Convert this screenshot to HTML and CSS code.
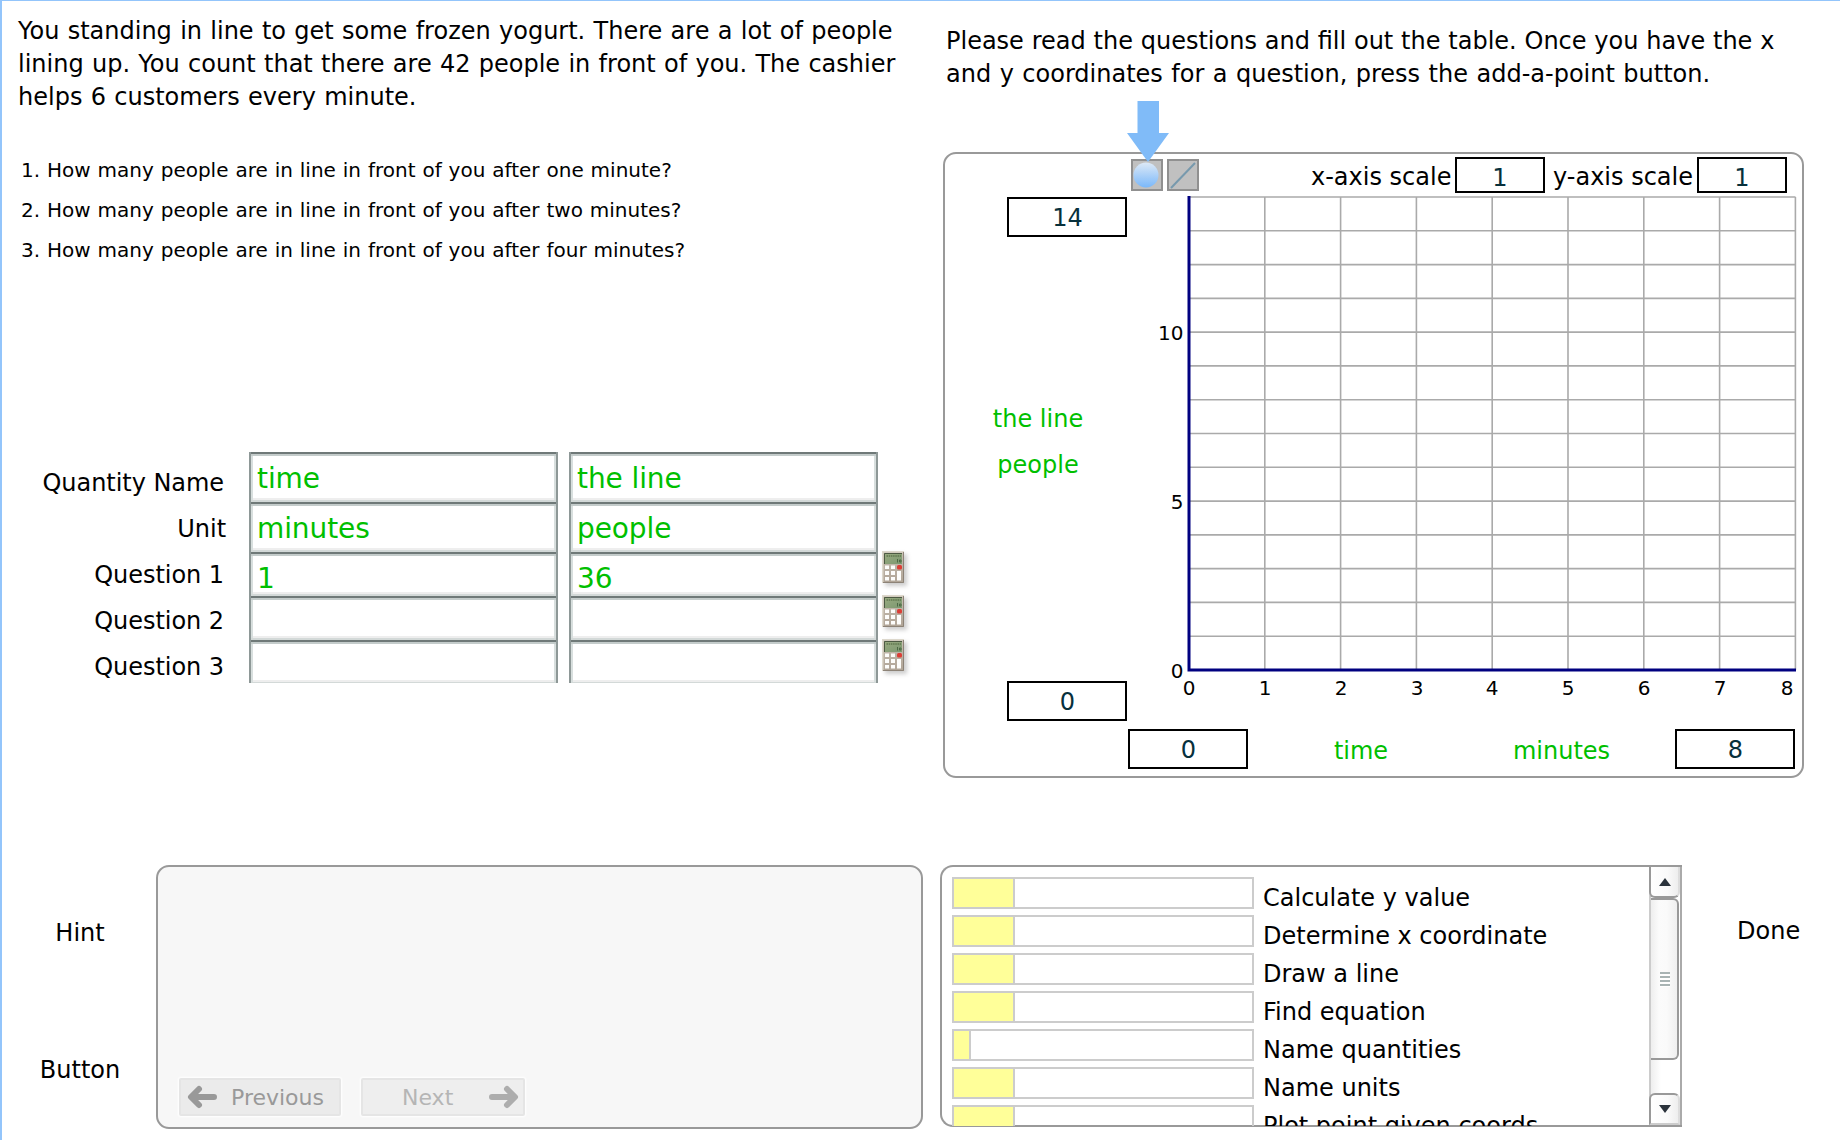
FILE: index.html
```html
<!DOCTYPE html>
<html lang="en">
<head>
<meta charset="utf-8">
<title>Frozen Yogurt Line</title>
<link rel="stylesheet" href="styles.css">
</head>
<body>
<svg class="defs" width="0" height="0" aria-hidden="true">
  <defs>
    <linearGradient id="lcd" x1="0" y1="0" x2="1" y2="1"><stop offset="0" stop-color="#9aab80"/><stop offset="1" stop-color="#7c9871"/></linearGradient>
    <linearGradient id="ball" x1="0" y1="0" x2="0" y2="1"><stop offset="0" stop-color="#dde9f6"/><stop offset="1" stop-color="#7ab8fa"/></linearGradient>
    <linearGradient id="case" x1="0" y1="0" x2="0" y2="1"><stop offset="0" stop-color="#c9c1b4"/><stop offset="1" stop-color="#b0a496"/></linearGradient>
    <symbol id="calc" viewBox="0 0 22 32">
      <rect width="22" height="32" fill="url(#case)"/>
      <path d="M0 32V0H22" fill="none" stroke="#ddd8cc" stroke-width="3"/>
      <path d="M21.500 1V31.500H1" fill="none" stroke="#8d8377"/>
      <rect x="2" y="2" width="18" height="11" fill="url(#lcd)"/>
      <path d="M2.500 13V2.500H20" fill="none" stroke="#4d5a43"/>
      <path d="M4.500 5H19" stroke="#60774f" stroke-width="1.500" stroke-dasharray="1.500 .7"/>
      <path d="M15.500 8v3.500M17.500 9h1.500v2h-1.500z" fill="none" stroke="#4c6844"/>
      <path d="M3 14.500h4v3.500h-4zM9 14.500h4v3.500h-4zM3 20h4v4h-4zM9 20h4v4h-4zM3 26h4v3.500h-4zM9 26h4v3.500h-4zM15 20h4v9.500h-4z" fill="#fdfdfb"/>
      <rect x="15" y="14" width="5" height="4.500" rx="1.500" fill="#dc3e36"/>
    </symbol>
  </defs>
</svg>
<div class="tutor">
  <section class="problem">
    <p class="story">You standing in line to get some frozen yogurt. There are a lot of people<br>lining up. You count that there are 42 people in front of you. The cashier<br>helps 6 customers every minute.</p>
    <div class="questions">
      <p>1. How many people are in line in front of you after one minute?</p>
      <p>2. How many people are in line in front of you after two minutes?</p>
      <p>3. How many people are in line in front of you after four minutes?</p>
    </div>
    <div class="worksheet">
      <div class="labels">
        <div>Quantity Name</div><div class="unit">Unit</div><div>Question 1</div><div>Question 2</div><div>Question 3</div>
      </div>
      <div class="column">
        <div class="cell tall">time</div><div class="cell tall">minutes</div><div class="cell">1</div><div class="cell"></div><div class="cell"></div>
      </div>
      <div class="column">
        <div class="cell tall">the line</div><div class="cell tall">people</div><div class="cell">36</div><div class="cell"></div><div class="cell"></div>
      </div>
      <div class="calculators">
        <svg><use href="#calc"/></svg><svg><use href="#calc"/></svg><svg><use href="#calc"/></svg>
      </div>
    </div>
  </section>

  <section class="grapher">
    <p class="instructions">Please read the questions and fill out the table. Once you have the x<br><span class="loose">and y coordinates for a question, press the add-a-point button.</span></p>
    <div class="graph">
      <svg class="pointer" viewBox="0 0 42 61"><path d="M10.500 0h21.500v32H42L21 61 0 32H10.500z" fill="#80bbf8"/></svg>
      <div class="toolbar">
        <svg class="tool" viewBox="0 0 32 32"><rect x="1" y="1" width="30" height="30" fill="#c0c0c0" stroke="#909090" stroke-width="2"/><circle cx="15" cy="16" r="12.500" fill="url(#ball)"/></svg>
        <svg class="tool" viewBox="0 0 32 32"><rect x="1" y="1" width="30" height="30" fill="#c0c0c0" stroke="#909090" stroke-width="2"/><path d="M4 29L28 4" stroke="#7799ad" stroke-width="2"/></svg>
        <span class="scale-label x-label">x-axis scale</span><div class="field scale">1</div>
        <span class="scale-label y-label">y-axis scale</span><div class="field scale">1</div>
      </div>
      <div class="plot-area">
        <div class="y-side">
          <div class="field">14</div>
          <div class="axis-name"><span>the line</span><span>people</span></div>
          <div class="field">0</div>
        </div>
        <svg class="plot" viewBox="1127 197 674 531">
          <g stroke="#aaa" stroke-width="1.600" fill="none">
            <path d="M1189 197H1795.500M1189 230.800H1795.500M1189 264.600H1795.500M1189 298.400H1795.500M1189 332.100H1795.500M1189 365.900H1795.500M1189 399.700H1795.500M1189 433.500H1795.500M1189 467.300H1795.500M1189 501.100H1795.500M1189 534.900H1795.500M1189 568.600H1795.500M1189 602.400H1795.500M1189 636.200H1795.500"/>
            <path d="M1264.800 197V670M1340.600 197V670M1416.400 197V670M1492.200 197V670M1568 197V670M1643.800 197V670M1719.600 197V670M1795.400 197V670"/>
          </g>
          <path d="M1189 196V670H1796" fill="none" stroke="#000080" stroke-width="3"/>
          <g class="ticks" text-anchor="middle">
            <text x="1189" y="695">0</text><text x="1265" y="695">1</text><text x="1341" y="695">2</text><text x="1417" y="695">3</text><text x="1492" y="695">4</text><text x="1568" y="695">5</text><text x="1644" y="695">6</text><text x="1720" y="695">7</text><text x="1787" y="695">8</text>
          </g>
          <g class="ticks" text-anchor="end">
            <text x="1183.500" y="340">10</text><text x="1183.500" y="509">5</text><text x="1183.500" y="678">0</text>
          </g>
        </svg>
      </div>
      <div class="x-side">
        <div class="field">0</div><span class="x-name">time</span><span class="x-unit">minutes</span><div class="field">8</div>
      </div>
    </div>
  </section>

  <section class="hints">
    <div class="hint-labels"><span>Hint</span><span>Button</span></div>
    <div class="hint-box">
      <div class="nav previous">
        <svg viewBox="0 0 30 24"><path d="M27 12H5M12 4L4 12L12 20" fill="none" stroke="#999" stroke-width="6" stroke-linecap="round" stroke-linejoin="round"/></svg><span>Previous</span>
      </div>
      <div class="nav next">
        <span>Next</span><svg viewBox="0 0 30 24"><path d="M3 12H25M18 4L26 12L18 20" fill="none" stroke="#adadad" stroke-width="6" stroke-linecap="round" stroke-linejoin="round"/></svg>
      </div>
    </div>
  </section>

  <section class="progress">
    <div class="skills">
      <div class="skill-list">
        <div class="skill"><div class="bar"><i></i></div>Calculate y value</div>
        <div class="skill"><div class="bar"><i></i></div>Determine x coordinate</div>
        <div class="skill"><div class="bar"><i></i></div>Draw a line</div>
        <div class="skill"><div class="bar"><i></i></div>Find equation</div>
        <div class="skill"><div class="bar"><i class="low"></i></div>Name quantities</div>
        <div class="skill"><div class="bar"><i></i></div>Name units</div>
        <div class="skill"><div class="bar"><i></i></div>Plot point given coords</div>
      </div>
      <div class="scrollbar">
        <div class="step up"><svg viewBox="0 0 12 8"><path d="M6 0L12 8H0z"/></svg></div>
        <div class="thumb"><b></b></div>
        <div class="step down"><svg viewBox="0 0 12 8"><path d="M0 0H12L6 8z"/></svg></div>
      </div>
    </div>
    <span class="done">Done</span>
  </section>
</div>
</body>
</html>
```
FILE: styles.css
```css
* { box-sizing: border-box; }
body { margin: 0; background: #fff; color: #000; font: 24px/33px Verdana, "DejaVu Sans", sans-serif; white-space: nowrap; }
p { margin: 0; }
.defs { position: absolute; }
.tutor {
  width: 1840px; height: 1140px; overflow: hidden;
  border: solid #93c5fb; border-width: 1px 0 0 2px;
  display: grid; grid-template-columns: 938px 1fr; grid-template-rows: 864px 1fr;
}

/* Word problem and worksheet */
.story { margin: 14px 0 0 16px; word-spacing: .67px; }
.questions { margin: 36px 0 0 19px; height: 302px; font-size: 20px; line-height: 40px; word-spacing: .55px; }
.worksheet { display: flex; height: 231px; overflow: hidden; }
.labels { width: 222px; padding-top: 8px; text-align: right; line-height: 46px; }
.labels div { letter-spacing: -.05px; }
.labels .unit { margin-right: -2px; }
.column { width: 309px; margin-left: 25px; border: solid #8e9897; border-width: 0 2px; }
.column + .column { margin-left: 11px; }
.cell {
  height: 44px; padding-left: 6px; line-height: 50px;
  border-top: 2px solid #6f7978;
  box-shadow: inset 0 2px #c4cccb, inset 0 -2px #d3d9d8, inset 2px 0 #d8dfde, inset -2px 0 #d8dfde, inset 0 -4px #eee;
  color: #00bf00; font-size: 28px; letter-spacing: -.1px;
}
.cell.tall { height: 50px; }
.calculators { display: flex; flex-direction: column; gap: 12px; margin: 99px 0 0 4px; width: 40px; }
.calculators svg { width: 22px; height: 32px; flex: none; overflow: visible; filter: drop-shadow(3px 3px 2px #0003); }

/* Graph */
.instructions { margin: 24px 0 0 6px; word-spacing: .18px; }
.loose { word-spacing: .85px; }
.graph { position: relative; width: 861px; height: 626px; margin: 61px 0 0 3px; border: 2px solid #999; border-radius: 13px; }
.pointer { position: absolute; left: 182px; top: -53px; width: 42px; height: 61px; }
.toolbar { display: flex; align-items: flex-start; height: 43px; padding: 3px 0 0 186px; }
.tool { width: 32px; height: 32px; margin: 2px 4px 0 0; }
.scale-label { line-height: 40px; }
.x-label { width: 144px; margin-left: 108px; }
.x-label + .field { margin-right: 8px; }
.y-label { width: 144px; }
.field { width: 120px; height: 40px; border: 2px solid #000; line-height: 39px; padding-left: 1px; text-align: center; color: #07303c; }
.field.scale { width: 90px; height: 36px; line-height: 39px; padding: 0; }
.plot-area { display: flex; height: 531px; }
.y-side { width: 182px; padding-left: 62px; display: flex; flex-direction: column; height: 524px; justify-content: space-between; }
.axis-name { display: flex; flex-direction: column; align-items: center; line-height: 46px; color: #00bf00; margin: 0 0 34px -58px; }
.plot { width: 674px; height: 531px; overflow: visible; }
.ticks { font-size: 20px; }
.x-side { display: flex; padding: 1px 0 0 183px; line-height: 45px; color: #00bf00; }
.x-name { width: 226px; text-align: center; }
.x-unit { width: 201px; padding-right: 26px; text-align: center; }

/* Hint window */
.hints { display: flex; }
.hint-labels { width: 154px; padding: 52px 0 0 2px; display: flex; flex-direction: column; gap: 104px; text-align: center; }
.hint-box { width: 767px; height: 264px; background: #f7f7f7; border: 2px solid #999; border-radius: 13px; display: flex; align-items: flex-end; gap: 20px; padding: 0 0 11px 21px; }
.nav { height: 38px; display: flex; align-items: center; border: 2px solid #e5e5e5; background: #ebebeb; color: #999; font-size: 22px; box-shadow: 0 0 2px 1px #fff; border-radius: 2px; }
.nav svg { width: 30px; height: 24px; }
.previous { width: 162px; padding-left: 6px; gap: 14px; }
.next { width: 164px; padding-left: 39px; gap: 36px; background: #eee; color: #b5b5b5; }

/* Skills */
.progress { display: flex; }
.skills { width: 742px; height: 262px; border: 2px solid #999; border-radius: 13px 0 0 13px; border-right-width: 0; display: flex; }
.skill-list { width: 707px; height: 259px; overflow: hidden; padding: 10px 0 0 10px; display: flex; flex-direction: column; gap: 6px; }
.skill { display: flex; flex: none; height: 32px; line-height: 42px; }
.bar { width: 302px; border: 2px solid #ccc; margin-right: 9px; }
.bar i { display: block; width: 61px; height: 28px; background: #ff9; border-right: 2px solid #ccc; }
.bar .low { width: 17px; }
.scrollbar { width: 33px; display: flex; flex-direction: column; border-left: 2px solid #ccc; border-right: 2px solid #aaa; background: linear-gradient(90deg, #eee, #fff 10px); }
.step { height: 31px; flex: none; margin-left: -2px; border: 2px solid #999; border-right-color: #ddd; background: linear-gradient(90deg, #fff, #fafafa 60%, #eee); display: flex; align-items: center; justify-content: center; }
.up { border-top: 0; border-radius: 0 0 6px 6px; }
.down { border-bottom-color: #ccc; border-radius: 6px 6px 0 0; margin-top: auto; height: 32px; }
.step svg { width: 12px; height: 8px; fill: #2b333c; }
.thumb { height: 162px; width: 28px; padding-left: 2px; border: 2px solid #999; border-left: 0; border-radius: 0 6px 6px 0; background: linear-gradient(90deg, #eee, #fbfbfb 8px, #fafafa 60%, #efefef); display: flex; align-items: center; justify-content: center; }
.thumb b { width: 10px; height: 15px; background: repeating-linear-gradient(#a9b4b4 0 2px, #fff 2px 4px); }
.done { margin: 50px 0 0 55px; }
```
